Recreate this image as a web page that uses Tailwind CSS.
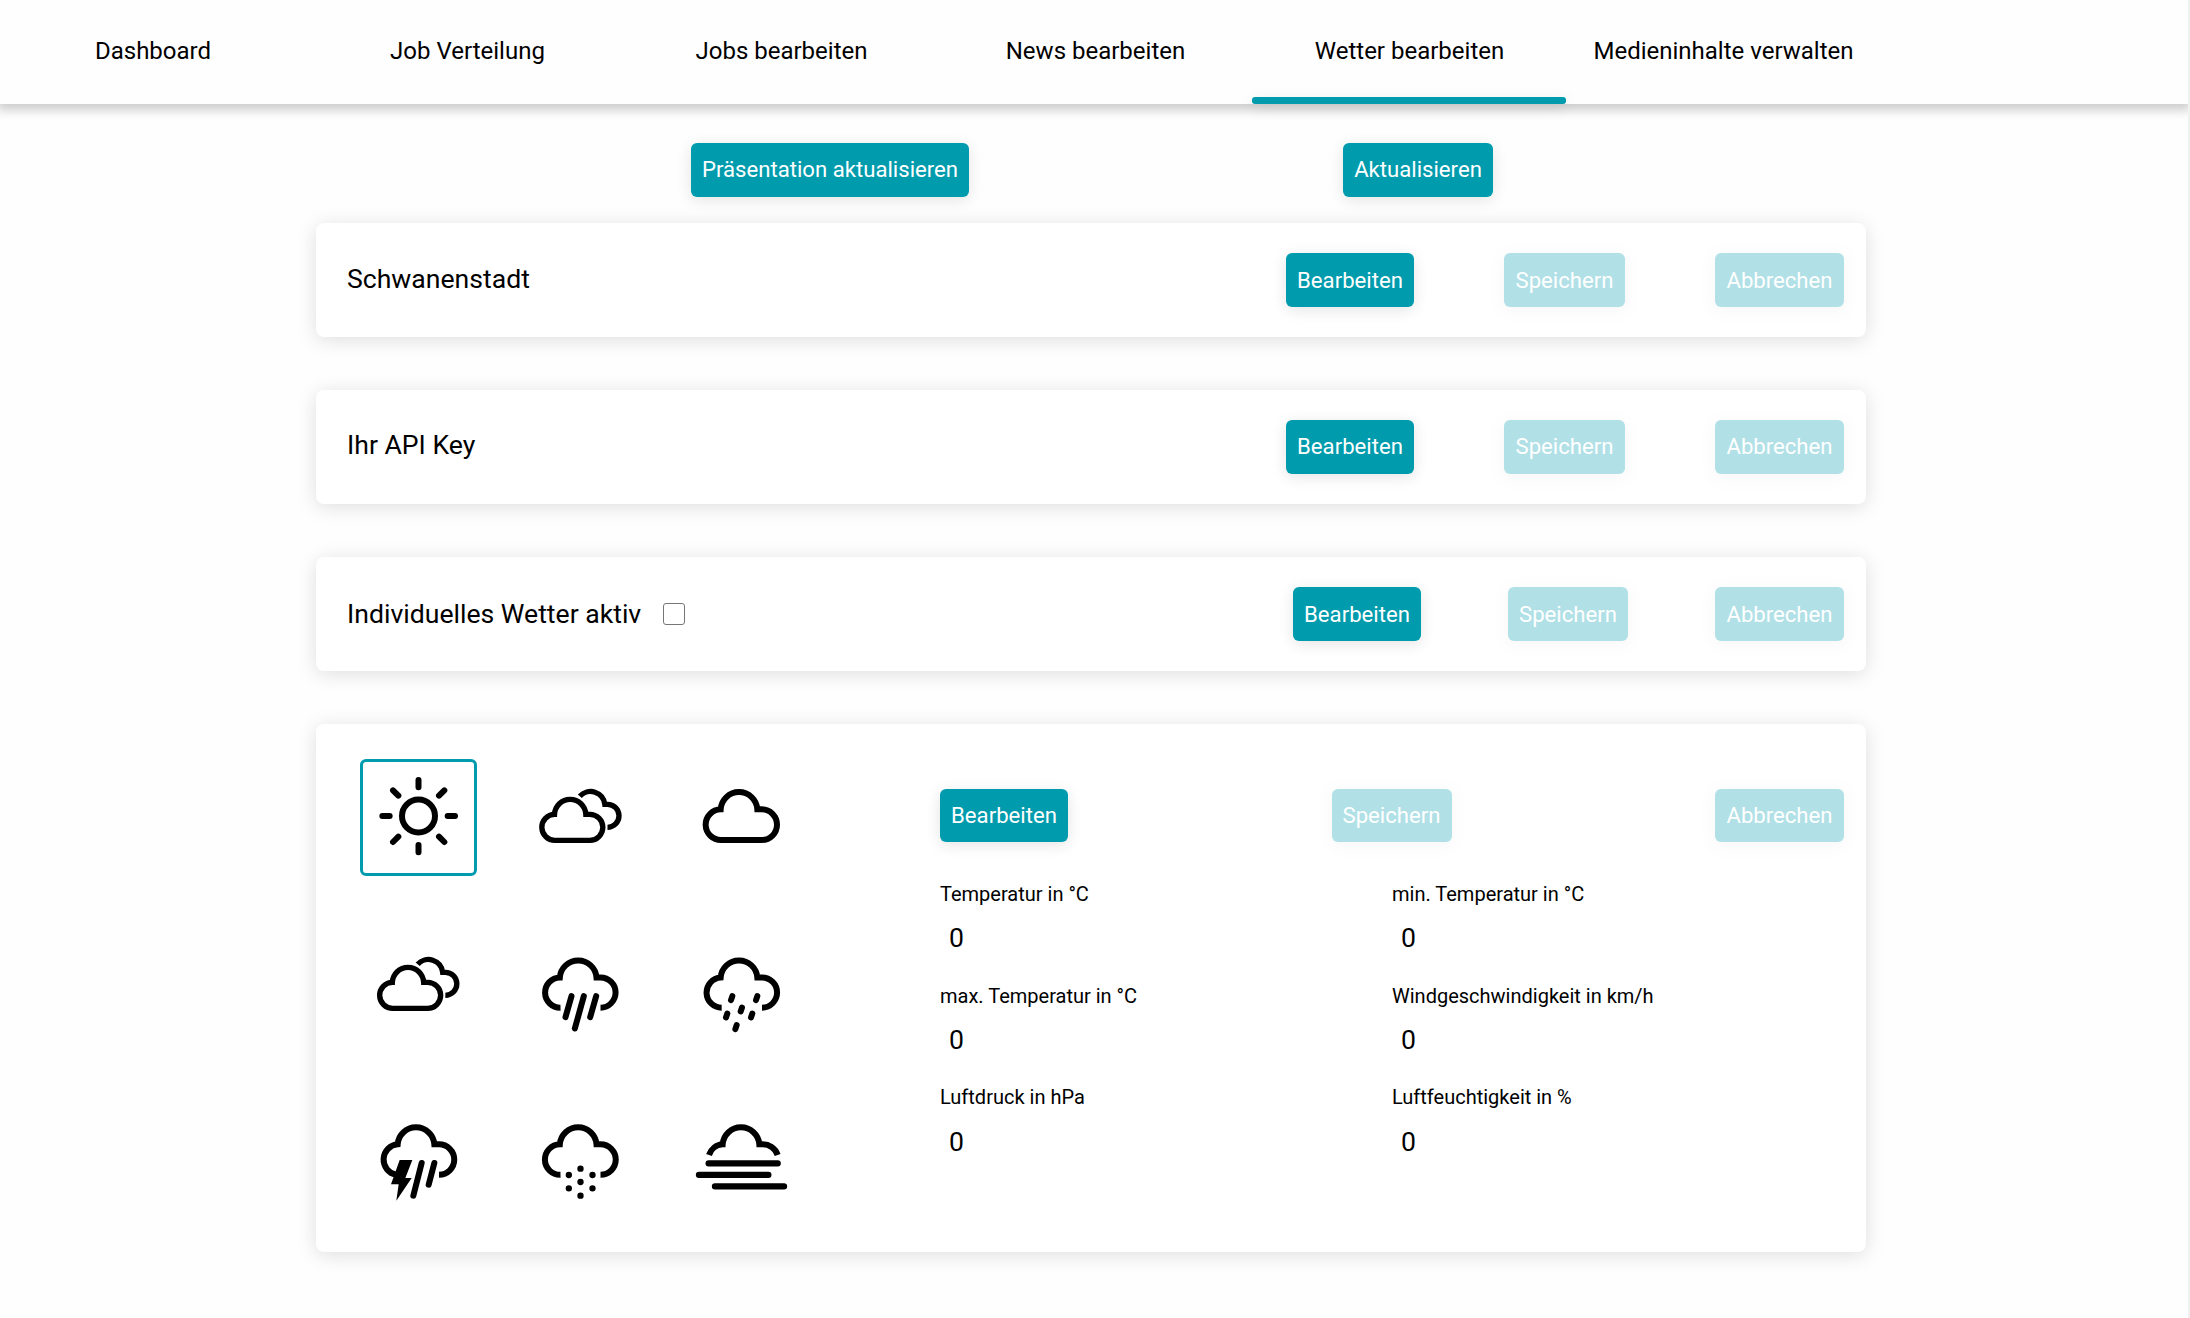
<!DOCTYPE html>
<html lang="de">
<head>
<meta charset="utf-8">
<title>Wetter bearbeiten</title>
<script src="https://cdn.jsdelivr.net/npm/@tailwindcss/browser@4"></script>
</head>
<body class="h-[1318px] overflow-hidden border-r-2 border-[#f1f1f1] bg-[#fefefe] font-['Roboto',sans-serif] text-black">
<nav class="relative flex h-[104px] bg-[#fefefe] pr-2 text-[24px] leading-[28px] shadow-[0_3px_10px_3px_rgba(0,0,0,0.2)]">
  <a class="-ml-1 w-[314px] pt-[37px] text-center">Dashboard</a>
  <a class="w-[314px] pt-[37px] pl-px text-center">Job Verteilung</a>
  <a class="w-[314px] pt-[37px] pl-px text-center">Jobs bearbeiten</a>
  <a class="w-[314px] pt-[37px] pl-px text-center">News bearbeiten</a>
  <a class="flex w-[314px] flex-col justify-between pt-[37px] text-center"><span class="pl-px">Wetter bearbeiten</span><span class="h-[7px] rounded-[3px] bg-[#009cad] shadow-[0_3px_15px_rgba(0,0,0,0.1)]"></span></a>
  <a class="w-[314px] pt-[37px] pl-px text-center">Medieninhalte verwalten</a>
</nav>
<main class="ml-[316px] w-[1550px] pt-[39px] text-[22.15px]">
  <div class="flex h-[54px] pl-[375px] text-white">
    <button class="mr-[374px] h-[54px] w-[278px] rounded-md bg-[#009cad] shadow-[0_3px_15px_rgba(0,0,0,0.11)]">Präsentation aktualisieren</button>
    <button class="h-[54px] w-[150px] rounded-md bg-[#009cad] shadow-[0_3px_15px_rgba(0,0,0,0.11)]">Aktualisieren</button>
  </div>
  <div class="mt-[26px] flex flex-col gap-[53px]">
    <section class="flex h-[114px] items-center justify-between rounded-lg bg-white pr-[22px] pl-[31px] shadow-[0_3px_20px_rgba(0,0,0,0.13)]">
      <h2 class="pb-[3px] text-[26.6px]">Schwanenstadt</h2>
      <div class="flex gap-[90px] text-white">
        <button class="h-[54px] w-[128px] rounded-md bg-[#009cad] pt-0.5 shadow-[0_3px_15px_rgba(0,0,0,0.11)]">Bearbeiten</button>
        <button class="h-[54px] w-[121px] rounded-md bg-[#009cad] pt-0.5 opacity-30 shadow-[0_3px_15px_rgba(0,0,0,0.11)]">Speichern</button>
        <button class="h-[54px] w-[129px] rounded-md bg-[#009cad] pt-0.5 opacity-30 shadow-[0_3px_15px_rgba(0,0,0,0.11)]">Abbrechen</button>
      </div>
    </section>
    <section class="flex h-[114px] items-center justify-between rounded-lg bg-white pr-[22px] pl-[31px] shadow-[0_3px_20px_rgba(0,0,0,0.13)]">
      <h2 class="pb-[5px] text-[26.6px]">Ihr API Key</h2>
      <div class="flex gap-[90px] text-white">
        <button class="h-[54px] w-[128px] rounded-md bg-[#009cad] shadow-[0_3px_15px_rgba(0,0,0,0.11)]">Bearbeiten</button>
        <button class="h-[54px] w-[121px] rounded-md bg-[#009cad] opacity-30 shadow-[0_3px_15px_rgba(0,0,0,0.11)]">Speichern</button>
        <button class="h-[54px] w-[129px] rounded-md bg-[#009cad] opacity-30 shadow-[0_3px_15px_rgba(0,0,0,0.11)]">Abbrechen</button>
      </div>
    </section>
    <section class="flex h-[114px] items-center justify-between rounded-lg bg-white pr-[22px] pl-[31px] shadow-[0_3px_20px_rgba(0,0,0,0.13)]">
      <div class="flex items-center">
        <h2 class="w-[316px] text-[26.6px]">Individuelles Wetter aktiv</h2>
        <span class="size-[22px] rounded-[3px] border border-[#767676] bg-white"></span>
      </div>
      <div class="flex gap-[87px] text-white">
        <button class="h-[54px] w-[128px] rounded-md bg-[#009cad] pt-0.5 shadow-[0_3px_15px_rgba(0,0,0,0.11)]">Bearbeiten</button>
        <button class="h-[54px] w-[120px] rounded-md bg-[#009cad] pt-0.5 opacity-30 shadow-[0_3px_15px_rgba(0,0,0,0.11)]">Speichern</button>
        <button class="h-[54px] w-[129px] rounded-md bg-[#009cad] pt-0.5 opacity-30 shadow-[0_3px_15px_rgba(0,0,0,0.11)]">Abbrechen</button>
      </div>
    </section>
    <section class="flex h-[528px] rounded-lg bg-white pr-[22px] pl-[44px] shadow-[0_3px_20px_rgba(0,0,0,0.13)]">
      <div class="mt-[35px] grid w-[580px] auto-rows-[117px] grid-cols-[117px_117px_117px] gap-x-[44.5px] gap-y-[50.5px]">
        <div class="size-[117px] rounded-md border-3 border-[#009cad]">
          <svg class="size-[111px]" viewBox="69 66 333 333" fill="none" stroke="#000" stroke-width="18" stroke-linecap="round"><circle cx="235.5" cy="228" r="49.5"/><path d="M235.5 120v22M235.5 315v22M127 228h22M323 228h22M159 151l16 16M313 151l-16 16M159 306l16-16M313 306l-16-16"/></svg>
        </div>
        <svg class="size-[117px]" viewBox="544.5 57 351 351" fill="none" stroke="#000" stroke-width="16"><path d="M644 301A39 39 0 0 1 642 223A47.05 47.05 0 0 1 736 223H748A39 39 0 0 1 748 301Z"/><path d="M718 169A43 43 0 0 1 793 193H801A34.5 34.5 0 0 1 801 262"/></svg>
        <svg class="size-[117px]" viewBox="1029 57 351 351" fill="none" stroke="#000" stroke-width="18"><path d="M1144 300A46 46 0 0 1 1142 208A55.1 55.1 0 0 1 1252 208H1265A46 46 0 0 1 1265 300Z"/></svg>
        <svg class="size-[117px]" viewBox="545 57 351 351" fill="none" stroke="#000" stroke-width="16"><path d="M644 301A39 39 0 0 1 642 223A47.05 47.05 0 0 1 736 223H748A39 39 0 0 1 748 301Z"/><path d="M718 169A43 43 0 0 1 793 193H801A34.5 34.5 0 0 1 801 262"/></svg>
        <svg class="size-[117px]" viewBox="544.5 19.5 351 351" fill="none" stroke="#000" stroke-width="18"><path d="M660 261.5A45 45 0 0 1 658 171A55.16 55.16 0 0 1 768 171H780A45.2 45.2 0 0 1 780 261.5"/><path stroke-linecap="round" d="M693 227L675 290M730 227L703 324M767 227L749 290"/></svg>
        <svg class="size-[117px]" viewBox="1029 19.5 351 351" fill="none" stroke="#000" stroke-width="18"><path d="M1145 261.5A45.3 45.3 0 0 1 1142 171A55.16 55.16 0 0 1 1252 171H1266A45.2 45.2 0 0 1 1266 261.5"/><path stroke-linecap="round" d="M1177 227L1173 239M1252 227L1248 239M1206 261L1202 273M1162 279L1158 291M1237 279L1233 291M1190 314L1186 326"/></svg>
        <svg class="size-[117px]" viewBox="60 12 351 351" fill="none" stroke="#000" stroke-width="18"><path d="M168 254A46 46 0 0 1 173 163A55.16 55.16 0 0 1 283 163H297A45.5 45.5 0 0 1 297 254.5"/><path stroke-linecap="round" d="M245 219L220 317M283 219L266 284"/><path fill="#000" stroke="none" d="M179 210H217L196 264H215L169 332L176 283H153Z"/></svg>
        <svg class="size-[117px]" viewBox="544.5 12 351 351" fill="none" stroke="#000" stroke-width="18"><path d="M660 254.5A45 45 0 0 1 658 163A55.16 55.16 0 0 1 768 163H780A45.5 45.5 0 0 1 780 254.5"/><path stroke-width="19" stroke-linecap="round" d="M720 236h.01M685 255h.01M756 255h.01M720 276h.01M685 295h.01M756 295h.01M720 317h.01"/></svg>
        <svg class="size-[117px]" viewBox="1029 12 351 351" fill="none" stroke="#000" stroke-width="18"><path d="M1107 195A46 46 0 0 1 1148 163A55.16 55.16 0 0 1 1258 163H1266A47 47 0 0 1 1313 195"/><path stroke-width="19" stroke-linecap="round" d="M1106 220H1313M1077 254.5H1285M1125 289H1332"/></svg>
      </div>
      <div class="mt-[65px] flex-1">
        <div class="flex justify-between text-white">
          <button class="h-[53px] w-[128px] rounded-md bg-[#009cad] pt-px shadow-[0_3px_15px_rgba(0,0,0,0.11)]">Bearbeiten</button>
          <button class="h-[53px] w-[120px] rounded-md bg-[#009cad] pt-px opacity-30 shadow-[0_3px_15px_rgba(0,0,0,0.11)]">Speichern</button>
          <button class="h-[53px] w-[129px] rounded-md bg-[#009cad] pt-px opacity-30 shadow-[0_3px_15px_rgba(0,0,0,0.11)]">Abbrechen</button>
        </div>
        <dl class="mt-[38px] grid auto-rows-[101.7px] grid-cols-2 text-[20px] leading-[28px]">
          <div><dt>Temperatur in °C</dt><dd class="mt-[16.4px] pl-[9px] text-[26.6px]">0</dd></div>
          <div><dt>min. Temperatur in °C</dt><dd class="mt-[16.4px] pl-[9px] text-[26.6px]">0</dd></div>
          <div><dt>max. Temperatur in °C</dt><dd class="mt-[16.4px] pl-[9px] text-[26.6px]">0</dd></div>
          <div><dt>Windgeschwindigkeit in km/h</dt><dd class="mt-[16.4px] pl-[9px] text-[26.6px]">0</dd></div>
          <div><dt>Luftdruck in hPa</dt><dd class="mt-[16.4px] pl-[9px] text-[26.6px]">0</dd></div>
          <div><dt>Luftfeuchtigkeit in %</dt><dd class="mt-[16.4px] pl-[9px] text-[26.6px]">0</dd></div>
        </dl>
      </div>
    </section>
  </div>
</main>
</body>
</html>
